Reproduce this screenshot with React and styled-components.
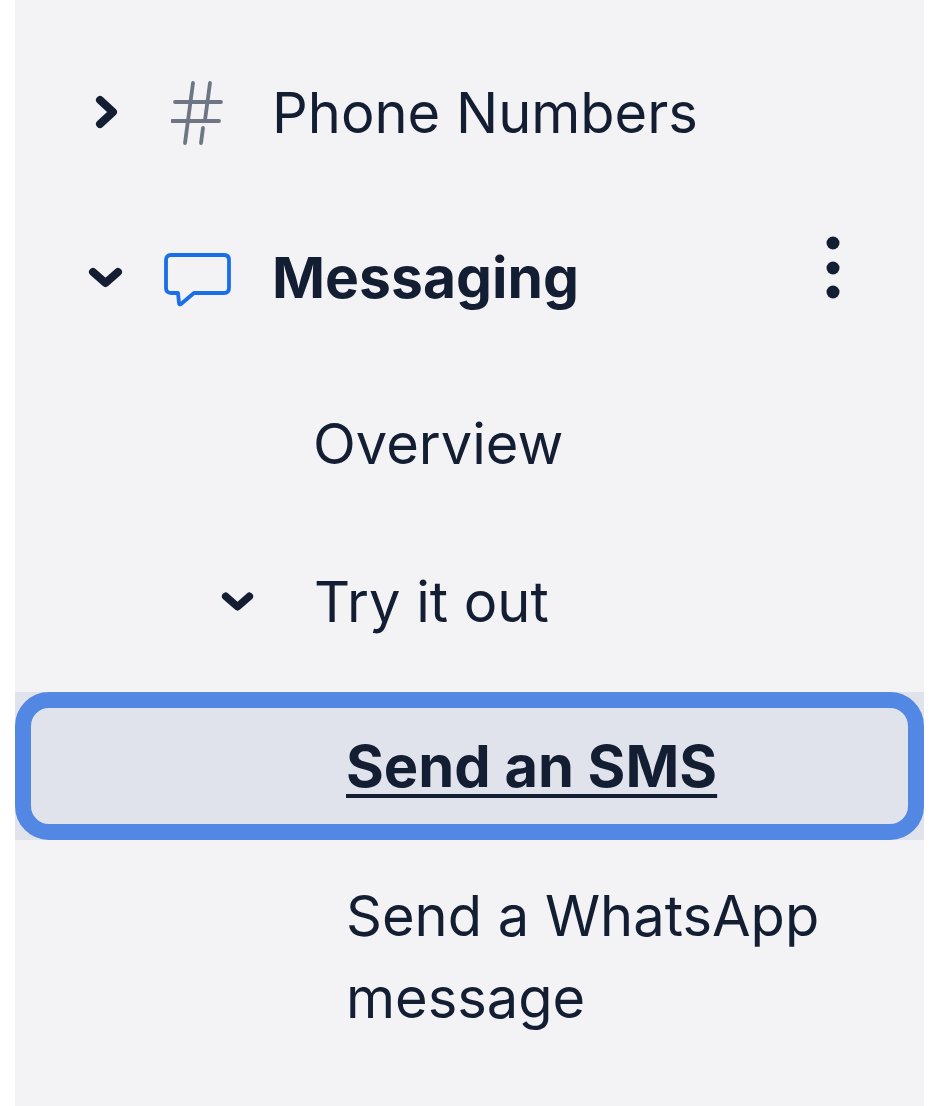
import React from "react";
import styled, { createGlobalStyle } from "styled-components";

const Global = createGlobalStyle`
  html, body { margin: 0; padding: 0; background: #ffffff; }
  body { font-family: Inter, "Liberation Sans", sans-serif; -webkit-font-smoothing: antialiased; }
`;

const Panel = styled.nav`
  box-sizing: border-box;
  width: 909px;
  height: 1106px;
  margin-left: 15px;
  background: #f3f3f6;
  padding-top: 31px;
  color: #141e33;
  font-size: 56px;
  overflow: hidden;
`;

const Row = styled.div`
  position: relative;
  display: flex;
  align-items: center;
  height: ${(p) => p.$height}px;
  padding-left: ${(p) => p.$indent}px;
`;

const Slot = styled.span`
  display: flex;
  justify-content: center;
  align-items: center;
  width: ${(p) => p.$width}px;
  flex: none;
`;

const BubbleSlot = styled(Slot)`
  padding-top: 4px;
`;

const Title = styled.span`
  font-weight: ${(p) => (p.$strong ? 700 : 400)};
  font-size: ${(p) => (p.$strong ? "57px" : "56px")};
  line-height: 82px;
`;

const More = styled.span`
  position: absolute;
  left: 810px;
  top: 40px;
  display: flex;
`;

const SelectedRow = styled.div`
  margin-top: 15px;
  background: #e0e3ec;
`;

const Selected = styled.a`
  box-sizing: border-box;
  display: flex;
  align-items: center;
  height: 148px;
  padding-left: 315px;
  background: #e0e3ec;
  border: 16px solid #5387e4;
  border-radius: 34px;
  font-size: 57.8px;
  font-weight: 700;
  line-height: 82px;
  color: #141e33;
  text-decoration: underline;
  text-decoration-thickness: 4px;
  text-underline-offset: 7px;
`;

const Multi = styled.div`
  padding: 35px 0 0 331px;
  line-height: 82px;
`;

const Chevron = ({ dir, size = 36 }) => (
  <svg width={size} height={size} viewBox="0 0 36 36" fill="none" stroke="#141e33" strokeWidth="8" strokeLinecap="round" strokeLinejoin="round">
    {dir === "right" ? <path d="M12 5 L25 17 L12 29" /> : <path d="M5 12 L17.5 23 L30 12" />}
  </svg>
);

const Hash = () => (
  <svg width="54" height="66" viewBox="0 0 54 66" fill="none" stroke="#6f7582" strokeWidth="3.8" strokeLinecap="round">
    <path d="M22 3 L14 63" />
    <path d="M39 3 L34 40" />
    <path d="M32 48 L30 63" />
    <path d="M4 22 L50 22" />
    <path d="M1 41 L48 41" />
  </svg>
);

const Bubble = () => (
  <svg width="68" height="54" viewBox="0 0 68 54" fill="none" stroke="#1a6fe8" strokeWidth="3.8" strokeLinejoin="round">
    <path d="M7 2 H60 Q65 2 65 7 V35 Q65 40 60 40 H30 L17 51 Q15 52 15 50 L14 40 H7 Q2 40 2 35 V7 Q2 2 7 2 Z" />
  </svg>
);

const Dots = () => (
  <svg width="16" height="66" viewBox="0 0 16 66" fill="#141e33">
    <circle cx="8" cy="8" r="6.5" />
    <circle cx="8" cy="33" r="6.5" />
    <circle cx="8" cy="57" r="6.5" />
  </svg>
);

export default function App() {
  return (
    <>
      <Global />
      <Panel>
        <Row $height={164} $indent={73}>
          <Slot $width={36}><Chevron dir="right" /></Slot>
          <Slot $width={148}><Hash /></Slot>
          <Title>Phone Numbers</Title>
        </Row>
        <Row $height={166} $indent={73}>
          <Slot $width={36}><Chevron dir="down" /></Slot>
          <BubbleSlot $width={148}><Bubble /></BubbleSlot>
          <Title $strong>Messaging</Title>
          <More><Dots /></More>
        </Row>
        <Row $height={166} $indent={298}>
          <Title>Overview</Title>
        </Row>
        <Row $height={150} $indent={205}>
          <Slot $width={36}><Chevron dir="down" size={34} /></Slot>
          <Slot $width={58} />
          <Title>Try it out</Title>
        </Row>
        <SelectedRow>
          <Selected href="#">Send an SMS</Selected>
        </SelectedRow>
        <Multi>Send a WhatsApp<br />message</Multi>
      </Panel>
    </>
  );
}
